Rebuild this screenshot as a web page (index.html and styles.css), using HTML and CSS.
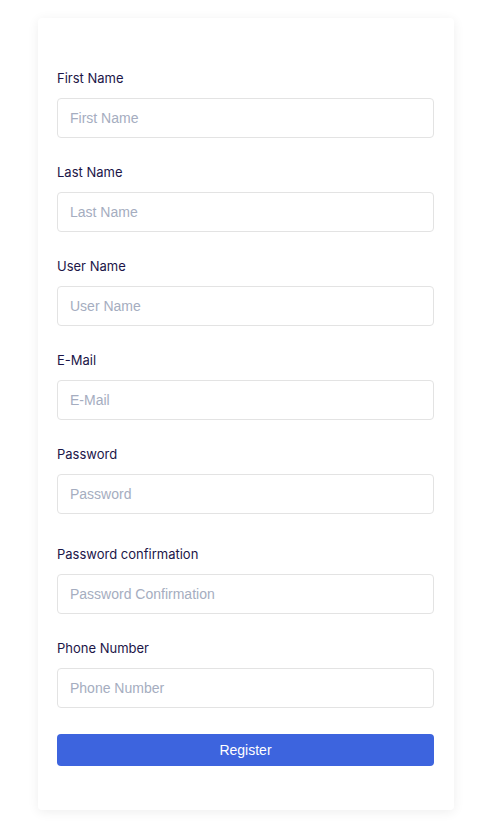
FILE: index.html
```html
<!DOCTYPE html>
<html>
<head>
<meta charset="utf-8">
<link rel="stylesheet" href="styles.css">
</head>
<body>
<div class="card">
  <form class="form">
    <div class="group">
      <label class="label">First Name</label>
      <input class="input" type="text" placeholder="First Name">
    </div>
    <div class="group">
      <label class="label">Last Name</label>
      <input class="input" type="text" placeholder="Last Name">
    </div>
    <div class="group">
      <label class="label">User Name</label>
      <input class="input" type="text" placeholder="User Name">
    </div>
    <div class="group">
      <label class="label">E-Mail</label>
      <input class="input" type="text" placeholder="E-Mail">
    </div>
    <div class="group group-pw">
      <label class="label">Password</label>
      <input class="input" type="password" placeholder="Password">
    </div>
    <div class="group">
      <label class="label">Password confirmation</label>
      <input class="input" type="password" placeholder="Password Confirmation">
    </div>
    <div class="group group-last">
      <label class="label">Phone Number</label>
      <input class="input" type="text" placeholder="Phone Number">
    </div>
    <button class="btn" type="button">Register</button>
  </form>
</div>
</body>
</html>
```
FILE: styles.css
```css
html, body {
  margin: 0;
  padding: 0;
  background: #ffffff;
}
body {
  padding: 18px 0 16px 38px;
}
.card {
  width: 416px;
  box-sizing: border-box;
  background: #fff;
  border-radius: 4px;
  box-shadow: 0 2px 12px rgba(0, 0, 0, 0.07);
  padding: 50px 20px 44px 19px;
}
.form {
  display: flex;
  flex-direction: column;
}
.group {
  display: flex;
  flex-direction: column;
  margin-bottom: 24.5px;
}
.group-pw {
  margin-bottom: 30.5px;
}
.group-last {
  margin-bottom: 26.5px;
}
.label {
  font-family: Inter, "Liberation Sans", sans-serif;
  font-size: 13px;
  line-height: 20px;
  color: #1c1648;
  margin-bottom: 9.5px;
}
.input {
  box-sizing: border-box;
  width: 100%;
  height: 40px;
  border: 1px solid #e3e3e3;
  border-radius: 4px;
  padding: 0 12px;
  font-family: "Liberation Sans", Arial, sans-serif;
  font-size: 14px;
  color: #333;
  background: #fff;
  outline: none;
}
.input::placeholder {
  color: #a5adc0;
}
.btn {
  height: 32px;
  width: 100%;
  border: none;
  border-radius: 4px;
  background: #3d64de;
  color: #fff;
  font-family: "Liberation Sans", Arial, sans-serif;
  font-size: 14px;
  cursor: pointer;
}
```
